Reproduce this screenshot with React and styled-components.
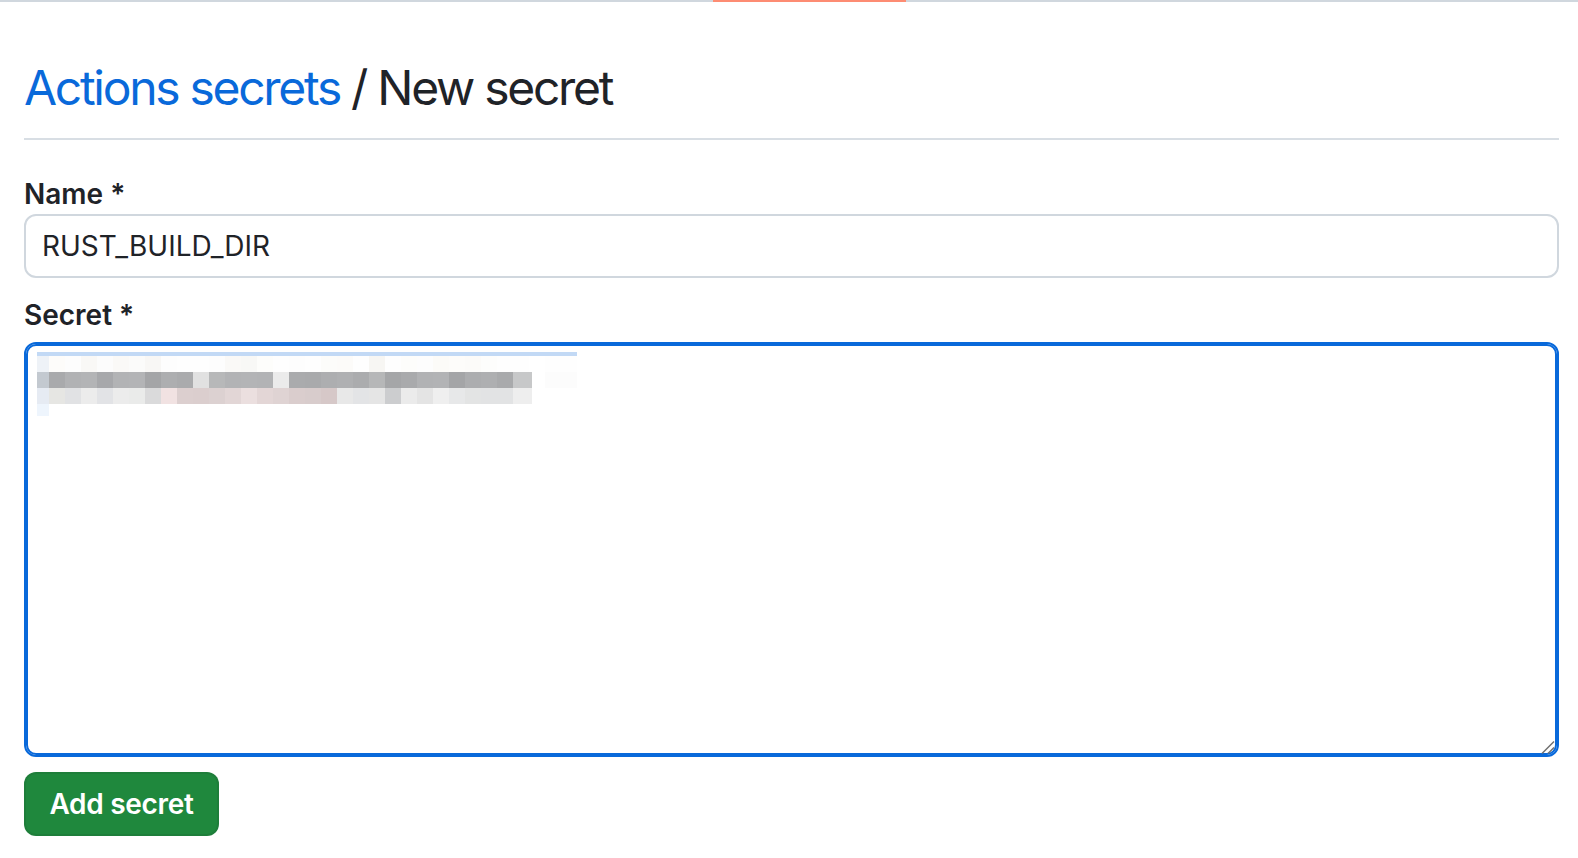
import styled, { createGlobalStyle } from 'styled-components';

const GlobalStyle = createGlobalStyle`
  body {
    margin: 0;
    background: #ffffff;
    font-family: Inter, "Noto Sans", sans-serif;
    color: #1f2328;
  }
`;

const row2 = [
  '#a9aaac', '#b1b2b4', '#b3b4b6', '#a7a8ab', '#b2b3b5', '#b3b4b6', '#a4a5a7', '#adaeb0',
  '#aaabad', '#e1e1e1', '#b7b8b9', '#b2b3b5', '#b3b4b6', '#b2b3b5', '#ebebeb', '#aaabad',
  '#a9aaac', '#adaeb0', '#afb0b2', '#abacae', '#b6b7b8', '#a5a6a8', '#a9aaac', '#b1b2b4',
  '#b2b3b5', '#a4a5a7', '#acadaf', '#aeafb1', '#a9aaac', '#c7c8c9',
];

const row3 = [
  '#e6e6e3', '#e1e2e4', '#ececec', '#e2e3e6', '#ececec', '#eaebea', '#dadadb', '#f1e2e2',
  '#dccfcf', '#dbcece', '#dcd1d1', '#e2d6d6', '#ebdfdf', '#e3d6d6', '#dfd3d3', '#dacdcd',
  '#d8cccc', '#d6c8c8', '#e8e8e8', '#e3e4e6', '#e5e5e5', '#cccdcf', '#ebebeb', '#e4e4e4',
  '#efefef', '#e7e8e9', '#e3e4e4', '#e2e3e4', '#e2e3e4', '#eeeeee',
];

const row1 = [
  '#fdfcfa', '#fdfdfd', '#f9f8f6', '#fcfcfc', '#faf9f7', '#fbfbfa', '#f8f7f5', '#fdfdfd',
  '#fefefe', '#fefefe', '#fdfdfd', '#faf9f7', '#f8f8f6', '#fdfdfb', '#fefefe', '#fdfdfd',
  '#fefefe', '#fcfcfa', '#fcfbf9', '#fefefe', '#f7f6f3', '#fefefe', '#fdfdfb', '#fdfdfd',
  '#fcfbf8', '#fdfcfa', '#fcfbf9', '#fdfdfc', '#fefefe', '#fefefe',
];

const Page = () => {
  return (
    <>
      <GlobalStyle />
      <TopBar>
        <TabUnderline />
      </TopBar>
      <Main>
        <Subhead>
          <Heading>
            <HeadLink href="#">Actions secrets</HeadLink> / New secret
          </Heading>
        </Subhead>

        <Field $gap={17}>
          <Label>Name *</Label>
          <Input defaultValue="RUST_BUILD_DIR" />
        </Field>

        <Field $gap={15}>
          <Label>Secret *</Label>
          <AreaWrap>
            <TextArea />
            <Redacted width="600" height="80" viewBox="0 -1 600 80">
              <rect x="13" y="9" width="540" height="4" fill="#c2d9f5" />
              <rect x="13" y="13" width="12" height="16" fill="#eef2f7" />
              {row1.map((c, i) => (
                <rect key={'a' + i} x={25 + i * 16} y="13" width="16" height="16" fill={c} />
              ))}
              <rect x="521" y="13" width="32" height="16" fill="#fefefe" />
              <rect x="13" y="29" width="12" height="16" fill="#c3c9d0" />
              {row2.map((c, i) => (
                <rect key={'b' + i} x={25 + i * 16} y="29" width={i === row2.length - 1 ? 19 : 16} height="16" fill={c} />
              ))}
              <rect x="521" y="29" width="32" height="16" fill="#fcfcfc" />
              <rect x="13" y="45" width="12" height="16" fill="#e6ebf3" />
              {row3.map((c, i) => (
                <rect key={'c' + i} x={25 + i * 16} y="45" width={i === row3.length - 1 ? 19 : 16} height="16" fill={c} />
              ))}
              <rect x="13" y="61" width="12" height="12" fill="#eef5fd" />
            </Redacted>
            <Grip width="16" height="16" viewBox="0 0 16 16">
              <line x1="2" y1="14.5" x2="14" y2="2.5" stroke="#6e6e6e" strokeWidth="1.4" />
              <line x1="8" y1="14.5" x2="14" y2="8.5" stroke="#6e6e6e" strokeWidth="1.4" />
            </Grip>
          </AreaWrap>
        </Field>

        <Button type="button">Add secret</Button>
      </Main>
    </>
  );
};

export default Page;

const TopBar = styled.div`
  position: relative;
  height: 2px;
  background-color: #d0d7de;
`;

const TabUnderline = styled.div`
  position: absolute;
  top: 0;
  left: 713px;
  width: 193px;
  height: 2px;
  background-color: #fd8c73;
`;

const Main = styled.div`
  padding: 0 19px 40px 24px;
  display: flex;
  flex-direction: column;
  align-items: flex-start;
`;

const Subhead = styled.div`
  align-self: stretch;
  margin-top: 56px;
  padding-bottom: 20px;
  border-bottom: 2px solid #d8dee4;
  margin-bottom: 34px;
`;

const Heading = styled.h2`
  margin: 0;
  font-size: 48px;
  line-height: 60px;
  font-weight: 400;
  letter-spacing: -2.3px;
  word-spacing: 0px;
  color: #1f2328;
`;

const HeadLink = styled.a`
  color: #0969da;
  text-decoration: none;
`;

const Field = styled.div`
  align-self: stretch;
  display: flex;
  flex-direction: column;
  margin-bottom: ${(p) => p.$gap}px;
`;

const Label = styled.label`
  font-size: 28px;
  line-height: 40px;
  font-weight: 600;
`;

const Input = styled.input`
  box-sizing: border-box;
  height: 64px;
  padding: 0 16px;
  border: 2px solid #d0d7de;
  border-radius: 12px;
  font-family: Inter, "Noto Sans", sans-serif;
  font-size: 28px;
  color: #1f2328;
  outline: none;
`;

const AreaWrap = styled.div`
  position: relative;
  display: flex;
  margin-top: 7px;
`;

const TextArea = styled.textarea`
  box-sizing: border-box;
  flex: 1;
  height: 415px;
  border: 2px solid #0969da;
  box-shadow: inset 0 0 0 2px #0969da;
  border-radius: 12px;
  outline: none;
  resize: none;
  font-family: Inter, sans-serif;
  font-size: 28px;
`;

const Redacted = styled.svg`
  position: absolute;
  left: 0;
  top: 0;
  pointer-events: none;
`;

const Grip = styled.svg`
  position: absolute;
  right: 3px;
  bottom: 2px;
  pointer-events: none;
`;

const Button = styled.button`
  height: 64px;
  width: 195px;
  border: 2px solid rgba(31, 35, 40, 0.1);
  border-radius: 12px;
  background-color: #1f883d;
  color: #ffffff;
  font-family: Inter, "Noto Sans", sans-serif;
  font-size: 28px;
  font-weight: 600;
  letter-spacing: -0.3px;
  cursor: pointer;
`;
